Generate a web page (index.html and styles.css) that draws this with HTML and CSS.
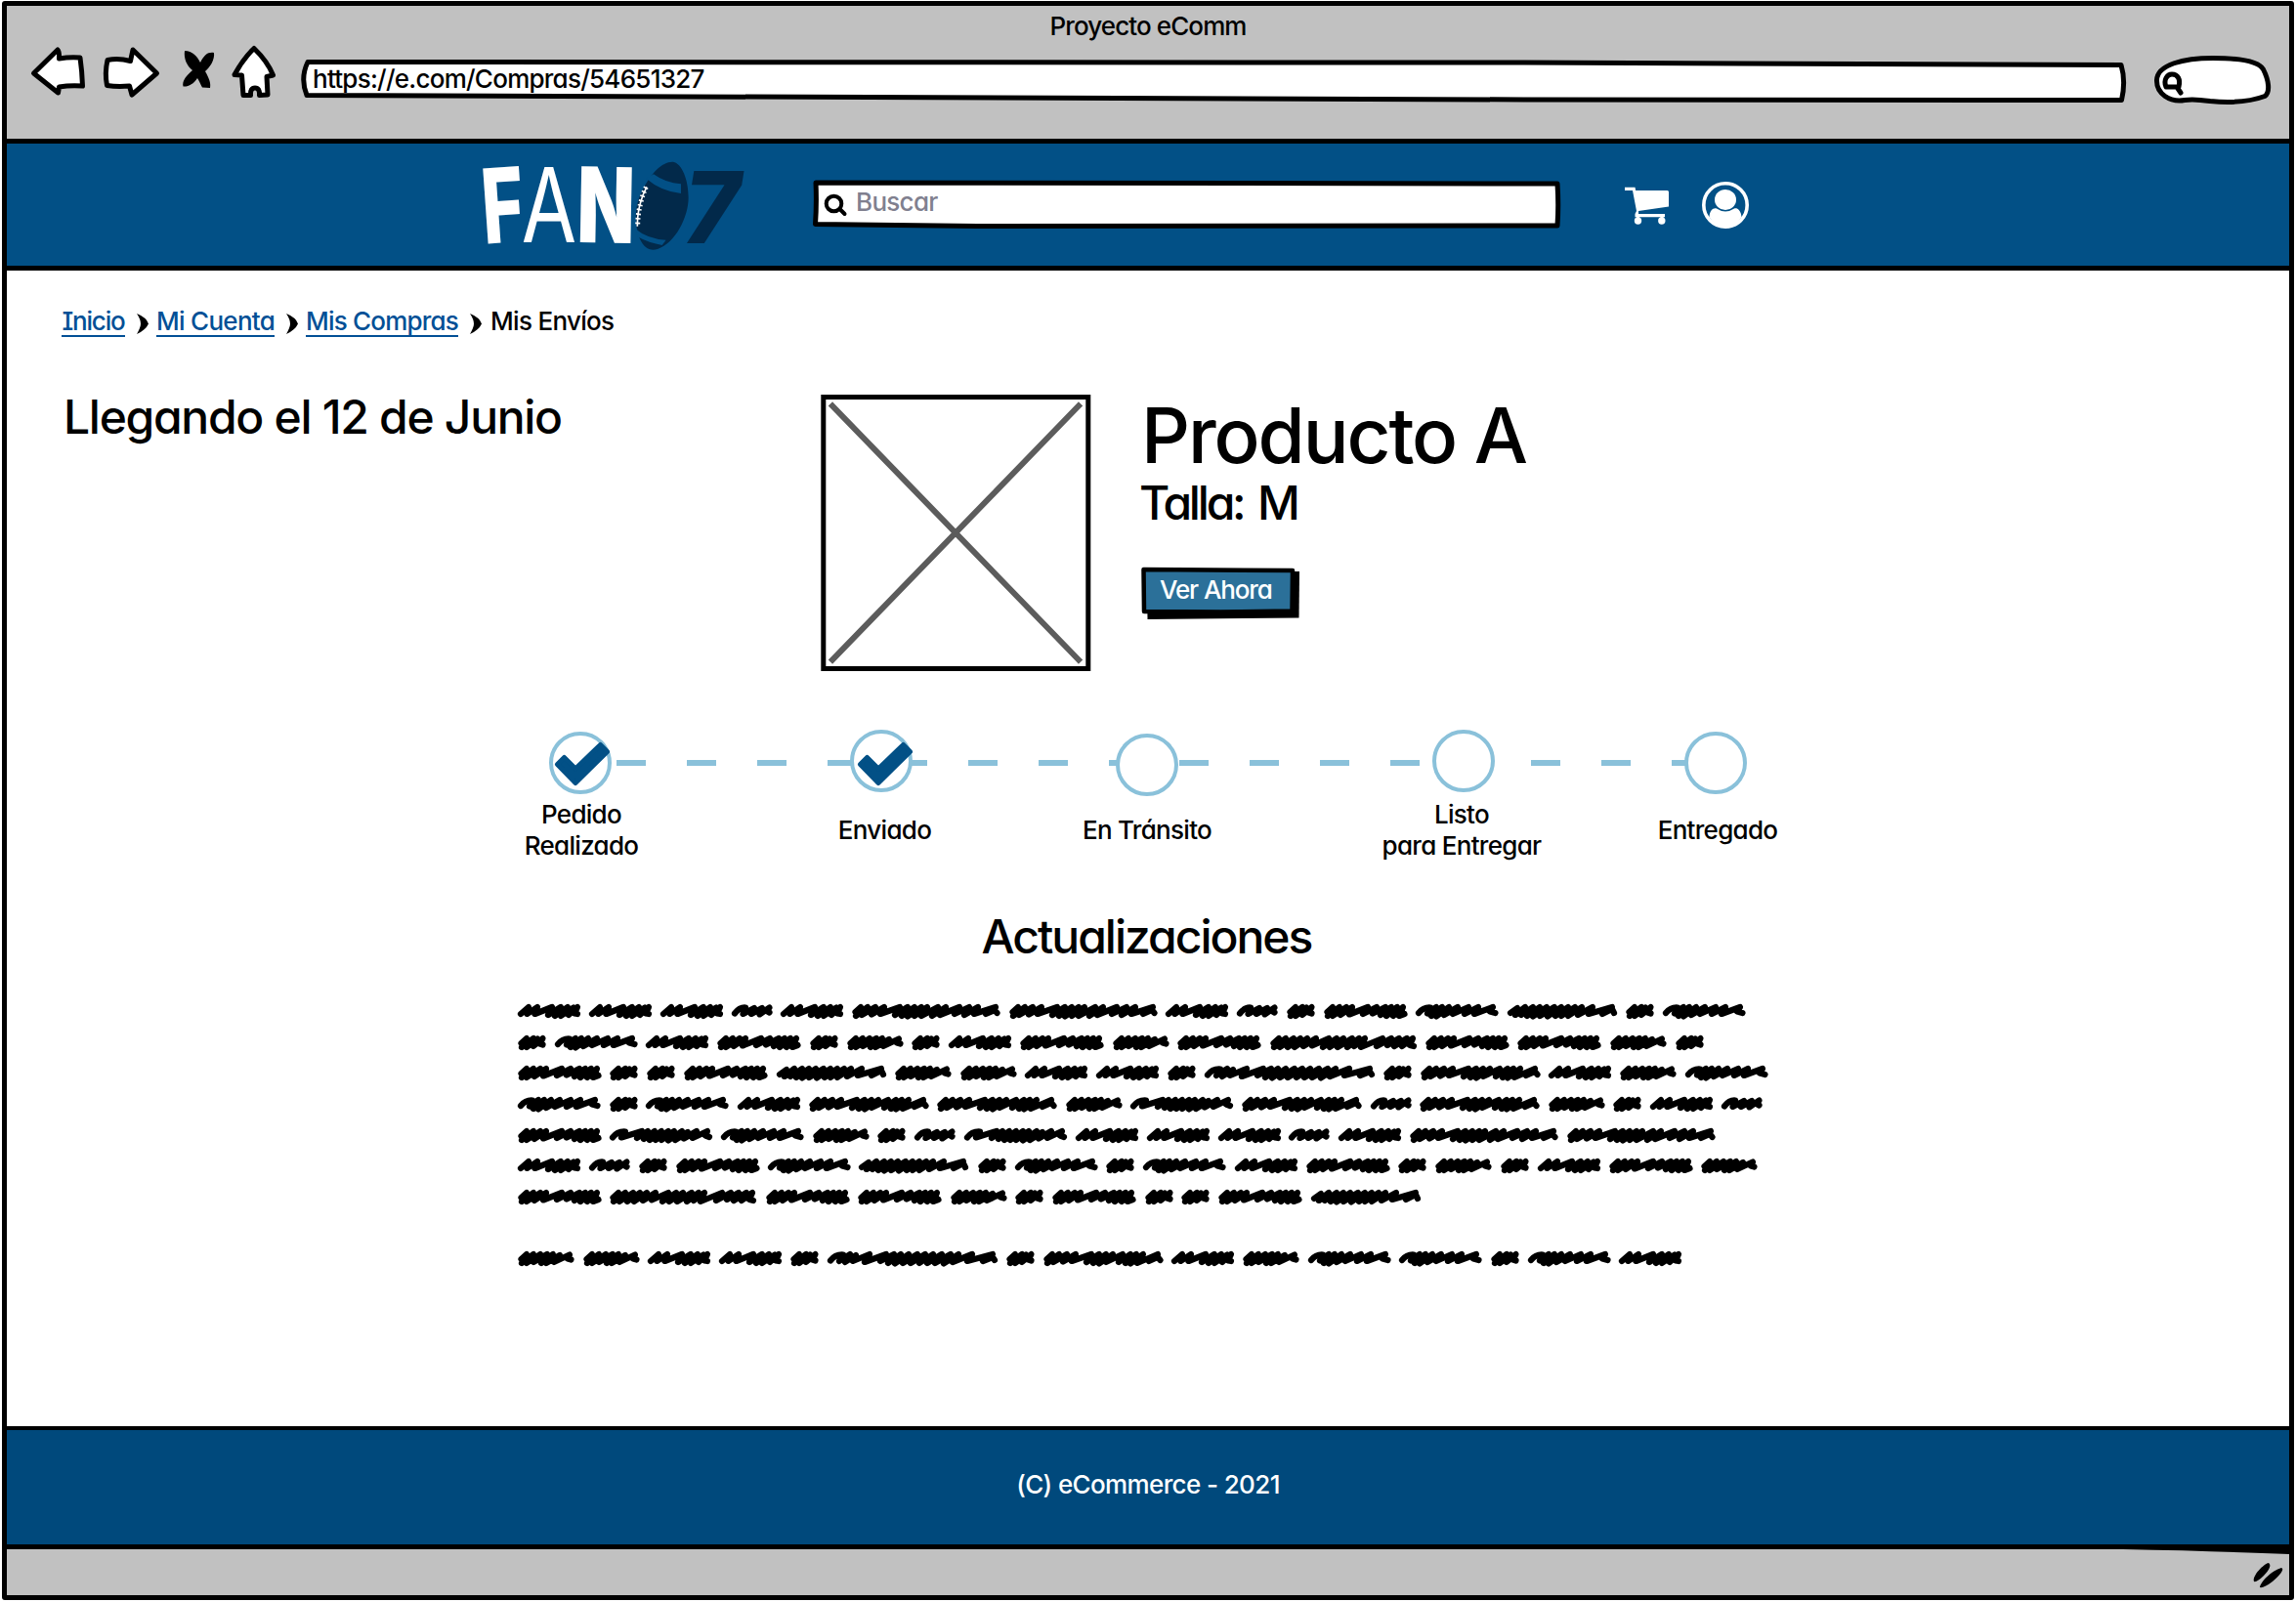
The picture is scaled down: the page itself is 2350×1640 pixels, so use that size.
FILE: index.html
```html
<!DOCTYPE html>
<html lang="es">
<head>
<meta charset="utf-8">
<title>Proyecto eComm</title>
<link rel="stylesheet" href="styles.css">
</head>
<body>
<div class="window">
  <div class="chrome">
    <div class="chrome-title">Proyecto eComm</div>
    <div class="toolbar">
      <svg class="ico-back" viewBox="30 45 60 58"><path class="ink-shape" d="M34.500 75L59 51Q61 53 60.500 60Q72 58 82 59Q84 73 84.500 88Q72 87 60.500 89L59.500 95Z"/></svg>
      <svg class="ico-fwd" viewBox="104 45 62 58"><path class="ink-shape" d="M110 61.500Q121 59 133.500 62.500L136 51L160.500 75L135 97L132.500 88Q120 89 109.500 87.500Q107 75 110 61.500Z"/></svg>
      <svg class="ico-stop" viewBox="184 45 40 58"><path d="M190 52C198 52 203 58 206 64C210 56 214 53 220 54C221 61 216 69 211 73C215 80 217 85 216 90L208 89.500C206 86 205 83 203 80C199 86 194 89 188.500 88.500C187 83 192 77 198 72C192 67 189 60 190 52Z"/></svg>
      <svg class="ico-home" viewBox="232 42 54 61"><path class="ink-shape" d="M260 49.500Q274 63 279.500 77L273 78.500L274 97L265.500 97.500Q266 90 261 90Q256 90 256.500 97.500L249 97.500L247.500 77L240 76.500Q249 60 260 49.500Z"/></svg>
      <div class="url">
        <svg class="sketch" viewBox="306 59 1870 48"><path class="ink-shape" d="M315 63.500Q1000 63 1560 64Q1900 66 2171 66.500Q2176 83 2171.500 102.500L1560 102Q900 97.500 314 97.500Q307 80 315 63.500Z"/></svg>
        <span class="url-text">https://e.com/Compras/54651327</span>
      </div>
      <svg class="ico-pill" viewBox="2203 54 124 56"><path class="ink-shape" d="M2236 102.500C2221 105 2207 96 2207.500 82C2208 66 2235 59.500 2265 59.500C2294 59.500 2312 63 2316.500 71C2322 82 2324 94 2318 98.500C2298 106 2278 105 2262 103.500C2252 102 2244 101 2236 102.500Z"/><path d="M2217 89C2214 82 2218 76 2223 76C2229 76 2232 81 2230 89ZM2228 89L2232 95" fill="none" stroke="#000" stroke-width="5" stroke-linecap="round" stroke-linejoin="round"/></svg>
    </div>
  </div>

  <header class="site-header">
    <svg class="logo" viewBox="40 45 810 280">
      <g class="logo-type">
        <text class="f" transform="translate(47 302) rotate(-4) scale(.7 1)">F</text>
        <text class="a" transform="translate(162 297) scale(.77 1)">A</text>
        <text class="n" transform="translate(332 297) rotate(1) scale(.72 1.010)">N</text>
        <text class="seven" transform="translate(660 300) scale(.96 1)">7</text>
      </g>
      <path fill="#02294a" d="M628 50C655 55 675 105 675 160C675 220 635 300 580 318C558 324 540 318 525 285C508 240 508 185 535 135C560 85 595 48 628 50Z"/>
      <path fill="#025086" d="M568 88Q605 115 652 118L652 147Q590 140 545 101ZM512 256Q550 288 606 290L594 306Q555 300 518 280Z"/>
      <path fill="none" stroke="#fff" stroke-width="5" d="M547 127Q534 150 527 178Q518 210 518 248"/>
      <path fill="none" stroke="#fff" stroke-width="15" stroke-dasharray="5 9" d="M545 128Q534 150 528 178Q519 210 519 250"/>
    </svg>
    <div class="search">
      <svg class="sketch" viewBox="831 183 767 52"><path class="ink-shape" d="M835 187Q1200 186 1594 188Q1595.500 210 1594 231L1000 231.500L834.500 229.500Q836 208 835 187Z"/></svg>
      <svg class="ico-search" viewBox="843 197 25 25"><g fill="none" stroke="#000" stroke-width="4" stroke-linecap="round"><circle cx="853.500" cy="208.500" r="7.800"/><path d="M860 214.500L864.500 219"/></g></svg>
      <span class="search-text">Buscar</span>
    </div>
    <svg class="ico-cart" viewBox="1662 190 48 44"><g fill="#fff"><path d="M1663 192.700H1673.500L1674.200 196H1706.500Q1708 196 1708 197.500V212.500L1677 217V220H1704V223.300H1673.500V220L1675 217L1671 196H1663Z"/><circle cx="1676.500" cy="227" r="3.700"/><circle cx="1700.800" cy="227" r="3.700"/><path d="M1675 222H1678V226H1675ZM1699.500 222H1702.500V226H1699.500Z"/></g></svg>
    <svg class="ico-user" viewBox="1741 185 50 50"><circle cx="1766" cy="210" r="22.200" fill="none" stroke="#fff" stroke-width="3.600"/><path fill="#fff" d="M1749.500 222C1750 216 1753 212.500 1757 213.500Q1766 219.500 1775 213.500C1779 212.500 1782 216 1782.500 222Q1777 232 1766 232Q1755 232 1749.500 222Z"/><ellipse cx="1766" cy="204.500" rx="11" ry="10.500" fill="#fff"/></svg>
  </header>

  <main class="content">
    <nav class="crumbs">
      <a class="crumb c1">Inicio</a><svg class="chev" viewBox="0 0 12 21"><path d="M0 0Q10 4 12 10.500Q9 17 0 21Q4 14 4 10.500Q4 6 0 0Z"/></svg>
      <a class="crumb c2">Mi Cuenta</a><svg class="chev" viewBox="0 0 12 21"><path d="M0 0Q10 4 12 10.500Q9 17 0 21Q4 14 4 10.500Q4 6 0 0Z"/></svg>
      <a class="crumb c3">Mis Compras</a><svg class="chev last" viewBox="0 0 12 21"><path d="M0 0Q10 4 12 10.500Q9 17 0 21Q4 14 4 10.500Q4 6 0 0Z"/></svg>
      <span class="here">Mis Envíos</span>
    </nav>

    <section class="product">
      <h2 class="arrival">Llegando el 12 de Junio</h2>
      <svg class="photo" viewBox="840 403 277 285"><rect x="842.800" y="406.500" width="271" height="278" fill="#fff" stroke="#000" stroke-width="5"/><path d="M852 415.500L1104 675.500M1104 415.500L852 675.500" stroke="#5c5c5c" stroke-width="6" stroke-linecap="square"/></svg>
      <div class="info">
        <h1 class="name">Producto A</h1>
        <div class="size">Talla: M</div>
        <div class="button">
          <svg class="sketch" viewBox="1167 580 165 55"><path d="M1174 586L1330 585L1329.500 632.500L1174.500 634Z"/><path d="M1170.500 583L1323 584L1322.500 625.500L1250 626.500L1171 626Z" fill="#2b7099" stroke="#000" stroke-width="4.500" stroke-linejoin="round"/></svg>
          <span class="button-text">Ver Ahora</span>
        </div>
      </div>
    </section>

    <section class="tracker">
      <svg class="track" viewBox="0 0 1110 6"><path d="M0 3H1110" stroke="#8ac1da" stroke-width="6" stroke-dasharray="30 42"/></svg>
      <div class="step s1"><svg class="dot" viewBox="0 0 64 64"><circle cx="32" cy="32" r="30"/><path class="tick" d="M8.500 33.500L15.500 26.500L27 38L52.500 13.500L59.500 20.500L27 52.500Z"/></svg><div class="label">Pedido<br>Realizado</div></div>
      <div class="step s2"><svg class="dot" viewBox="0 0 64 64"><circle cx="32" cy="32" r="30"/><path class="tick" d="M10.500 35.500L17.500 28.500L29 40L54.500 15.500L61.500 22.500L29 54.500Z"/></svg><div class="label">Enviado</div></div>
      <div class="step s3"><svg class="dot" viewBox="0 0 64 64"><circle cx="32" cy="32" r="30"/></svg><div class="label">En Tránsito</div></div>
      <div class="step s4"><svg class="dot" viewBox="0 0 64 64"><circle cx="32" cy="32" r="30"/></svg><div class="label">Listo<br>para Entregar</div></div>
      <div class="step s5"><svg class="dot" viewBox="0 0 64 64"><circle cx="32" cy="32" r="30"/></svg><div class="label">Entregado</div></div>
    </section>

    <h2 class="updates">Actualizaciones</h2>
    <div class="scribble" id="scribble"></div>
  </main>

  <footer class="site-footer">(C) eCommerce - 2021</footer>
  <div class="status">
    <svg class="wedge" viewBox="0 0 170 5"><path d="M0 0H170V5Q100 2 0 0Z"/></svg>
    <svg class="grip" viewBox="0 0 34 28"><path d="M2 19C0 13 12 1 17 0C20 2 18 7 12 13Q5 20 2 19ZM8 25C9 19 20 8 30 5C34 6 28 13 21 19Q12 26 8 25Z"/></svg>
  </div>
</div>
<script src="scribble.js"></script>
</body>
</html>
```
FILE: scribble.js
```js
// Scribbled words: [width, path], keyed by word shape.
const WORDS = {
  a2: [29, 'M3.500 8L9 3L4 12L16 3L9 12L20 3.500L16 11L25.500 3L22.500 8.500L25.500 9.500'],
  a3: [41.7, 'M3 9.500Q8 3 14 3.500L11.500 10L23 4L20 10L31 4L28.500 10.500L38.500 3.500L36 7L38.500 8.500'],
  a4: [57.7, 'M3.500 8L9 3L4 12L16 3L9 12L23 3L16 11L30 3L24 12L36 3L29 12L43 4L37 11L53 3.500L51 7.500L54.500 8.500'],
  a5: [64, 'M3 10L11 3L9.500 10L20 3L17.500 10L35 3L31 11L44 3L38 12L51 3L44 12L57 3.500L52 11L61 3L58 9.500L61 10'],
  n6: [84.6, 'M3 9Q8 3 15 3.500L12 9.500L21 3L16 12L27 3L21 12.500L34 3L29 11L43 3L38 10L54 3L50 10L64 3L60 10L79 3L76 7.500L81.500 9'],
  m6: [85.5, 'M3.500 8L9 3L4 12L16 3L9 12L23 3L17 11L29 3L26 10.500L45 3L40 10L54 3L50 9.500L63 3L58 11L69 3L64 12L75 3L71 12L81 3L77 12L82.500 10'],
  n7: [104.8, 'M3 9.500Q8 3 16 3.500L12 9.500L33 3L28 10L39 3L35 11L46 3L41 12L53 3L47 12L60 3L53 12L66 3L60 12.500L74 3L67 12L80 4L76 10.500L89 3L85 10L100 3L98 7.500L102 9'],
  m8: [112.4, 'M3 9L10 4L8 11L18 3L14 11L26 3L20 12L33 3L26 12.500L40 3L33 12L48 3L41 12.500L55 3L49 12L62 3L55 12L69 3L62 12L76 3L72 11L87 3L83 10L107 3L97 10L107 5L109 9'],
  m9: [122.5, 'M3.500 8L9 3L4 12L16 3L10 11L24 3L20 10.500L33 3L29 10L49 3L44 11L57 3L51 12L64 3L57 12.500L71 3L64 11L81 3L77 11L89 3L84 12L95 3L89 12.500L102 3L96 12L117 3L108 10L117 6L119.500 9'],
  p10: [151.6, 'M3.500 8L9 3L4 12L16 3L10 11L24 3L20 10.500L33 3L29 10L49 3L44 11L57 3L51 12L64 3L57 12.500L71 3L64 12L77 3L71 12L88 3L82 12L96 3L90 11L110 3L105 10L120 3L115 11L129 3L125 10L147 3L137 10L146 6L148.500 9'],
  q10: [150.3, 'M3.500 8L9 3L4 12L16 3L10 12L24 3L18 12L31 3L25 12L38 3L34 11L47 3L43 10.500L60 3L54 12L68 3L61 12L75 3L69 12L84 3L79 12L91 3L86 11L97 3L93 12L115 3L109 11L124 3L120 10L132 3L127 11L140 3L135 11L146 3L143 10L147 11'],
  n12: [173.9, 'M3 9.500Q8 3 16 3.500L12 10L23 3L18 11L29 4L26 10L43 3L38 11L60 3L54 10L68 3L62 12L75 3L69 12.500L83 3L77 12L92 3L85 12L100 3L94 12L108 3L102 12L117 3L110 12L126 3L119 12.500L134 3L128 11L148 3L143 10L169 3L159 10L169 6L171 9']
};
const LINES = [
  'a5 a5 a5 a3 a5 p10 p10 a5 a3 a2 m6 n6 m8 a2 n6',
  'a2 n6 a5 m6 a2 a4 a2 a5 m6 a4 m6 q10 m6 m6 a4 a2',
  'm6 a2 a2 m6 m8 a4 a4 a5 a5 a2 n12 a2 m9 a5 a4 n6',
  'n6 a2 n6 a5 m9 m9 a4 n7 m9 a3 m9 a4 a2 a5 a3',
  'm6 n7 n6 a4 a2 a3 n7 a5 a5 a5 a3 a5 p10 p10',
  'a5 a3 a2 m6 n6 m8 a2 n6 a2 n6 a5 m6 a2 a4 a2 a5 m6 a4',
  'm6 q10 m6 m6 a4 a2 m6 a2 a2 m6 m8',
  '',
  'a4 a4 a5 a5 a2 n12 a2 m9 a5 a4 n6 n6 a2 n6 a5'
];
document.getElementById('scribble').innerHTML = LINES.map(line =>
  '<div class="scribble-line">' + line.split(' ').filter(Boolean).map(k => {
    const [w, d] = WORDS[k];
    return `<svg class="word" width="${w}" height="15" viewBox="0 0 ${w} 15"><path d="${d}"/></svg>`;
  }).join('') + '</div>').join('');
```
FILE: styles.css
```css
* { box-sizing: border-box; }
body {
  margin: 0;
  width: 2350px;
  height: 1640px;
  overflow: hidden;
  background: #fff;
  color: #000;
  font: 500 26px/32px Inter, "Open Sans", sans-serif;
  font-feature-settings: "cv11", "cv08";
}
svg { display: block; flex: none; overflow: visible; }
h1, h2 { margin: 0; font-weight: 500; }
span, a, h1, h2, .size, .label, .chrome-title { white-space: nowrap; }

.window {
  display: flex;
  flex-direction: column;
  width: 2346px;
  height: 1637px;
  margin: 1px 2px 0;
  border: 5px solid #000;
  border-radius: 3px;
}
.ink-shape { fill: #fff; stroke: #000; stroke-width: 5; stroke-linejoin: round; }
.sketch { position: absolute; left: 0; top: 0; width: 100%; height: 100%; }

.chrome { height: 136px; background: #c1c1c1; padding-top: 5px; }
.chrome-title { text-align: center; letter-spacing: -0.9px; }
.toolbar { display: flex; align-items: flex-start; margin-top: -1px; padding-left: 23px; }
.ico-back { width: 60px; height: 58px; margin-top: 3px; }
.ico-fwd { width: 62px; height: 58px; margin: 3px 0 0 14px; }
.ico-stop { width: 40px; height: 58px; margin: 3px 0 0 17px; }
.ico-home { width: 54px; height: 61px; margin-left: 9px; }
.url { position: relative; width: 1870px; height: 48px; margin: 17px 0 0 20px; padding: 6px 0 0 14px; }
.url-text { position: relative; letter-spacing: -0.750px; }
.ico-pill { width: 124px; height: 56px; margin: 12px 0 0 27px; }

.site-header {
  display: flex;
  align-items: flex-start;
  height: 135px;
  padding-left: 486px;
  border-top: 5px solid #000;
  border-bottom: 5px solid #000;
  background: #025086;
}
.logo { width: 270px; height: 93.300px; margin-top: 17px; }
.logo-type text { font-size: 318px; font-family: Inter, sans-serif; fill: #fff; }
.logo-type .f { font-weight: 800; }
.logo-type .a { font-weight: 400; }
.logo-type .n { font-weight: 900; }
.logo-type .seven { font-weight: 800; font-style: italic; fill: #02294a; font-size: 306px; }
.search { position: relative; display: flex; width: 767px; height: 52px; margin: 36px 0 0 68px; padding-left: 12px; }
.ico-search { position: relative; width: 25px; height: 25px; margin-top: 14px; }
.search-text { position: relative; margin: 8px 0 0 8px; color: #80808f; letter-spacing: -0.700px; }
.ico-cart { width: 48px; height: 44px; margin: 42px 0 0 64px; }
.ico-user { width: 50px; height: 50px; margin: 38px 0 0 31px; }

.content { height: 1183px; padding-top: 36px; }
.crumbs { display: flex; height: 34px; padding-left: 56px; }
.crumb { display: flex; justify-content: center; height: 32px; color: #025096; border-bottom: 2.500px solid #025096; letter-spacing: -0.700px; }
.c1 { width: 65px; letter-spacing: -1.200px; }
.c2 { width: 121px; }
.c3 { width: 156px; letter-spacing: -0.800px; }
.chev { width: 12px; height: 21px; margin: 8px 8px 0 12px; }
.chev.last { margin-right: 9px; }
.here { letter-spacing: -0.700px; }

.product { display: flex; height: 285px; margin-top: 57px; }
.arrival { width: 775px; margin: -1px 0 0 58px; font-size: 48px; line-height: 48px; letter-spacing: -1.300px; }
.photo { width: 277px; height: 285px; margin-top: -1px; }
.info { margin-left: 50px; }
.name { font-size: 78px; line-height: 78px; margin: 3px 0 0 1px; letter-spacing: -2.100px; }
.size { font-size: 48px; line-height: 48px; margin: 6px 0 0 -1px; letter-spacing: -3.200px; word-spacing: 5px; }
.button { position: relative; width: 165px; height: 55px; margin-top: 41px; padding: 8px 0 0 20px; }
.button-text { position: relative; color: #fff; letter-spacing: -1.100px; }

.tracker { position: relative; display: flex; height: 138px; margin-top: 60px; padding-left: 502px; }
.track { position: absolute; left: 624px; top: 29px; width: 1110px; height: 6px; }
.step { position: relative; width: 170px; height: 138px; display: flex; flex-direction: column; align-items: center; }
.dot { width: 64px; height: 64px; }
.dot circle { fill: #fff; stroke: #8ac1da; stroke-width: 4; }
.dot .tick { fill: #025086; stroke: #025086; stroke-width: 5; stroke-linejoin: round; }
.s2 { margin-left: 138px; }
.s3 { margin-left: 102px; }
.s4 { margin-left: 154px; }
.s5 { margin-left: 88px; }
.s2 .dot, .s4 .dot { margin: -2px 0 2px; }
.s3 .dot { margin: 2px 0 -2px; }
.label {
  display: grid;
  align-content: center;
  height: 64px;
  margin-top: 5px;
  line-height: 31.700px;
  text-align: center;
  letter-spacing: -0.700px;
}
.s1 .label { padding-left: 2px; }
.s2 .label { padding-left: 7px; }
.s4 .label { padding-right: 4px; }
.s5 .label { padding-left: 4px; }

.updates { margin: 48px 3px 0 0; font-size: 48px; line-height: 48px; text-align: center; letter-spacing: -2px; }
.scribble { margin: 45px 0 0 523px; }
.scribble-line { display: flex; gap: 8.950px; height: 31.650px; }
.word path { fill: none; stroke: #000; stroke-width: 6.200; stroke-linecap: round; stroke-linejoin: round; }

.site-footer {
  height: 126px;
  padding-top: 40px;
  border-top: 4px solid #000;
  border-bottom: 5px solid #000;
  background: #00497c;
  color: #fff;
  text-align: center;
  letter-spacing: -0.620px;
}
.status { position: relative; flex: 1; display: flex; justify-content: flex-end; background: #c1c1c1; }
.wedge { position: absolute; right: 0; top: 0; width: 170px; height: 5px; }
.grip { width: 34px; height: 28px; margin: 14px 4px 0 0; }
```
